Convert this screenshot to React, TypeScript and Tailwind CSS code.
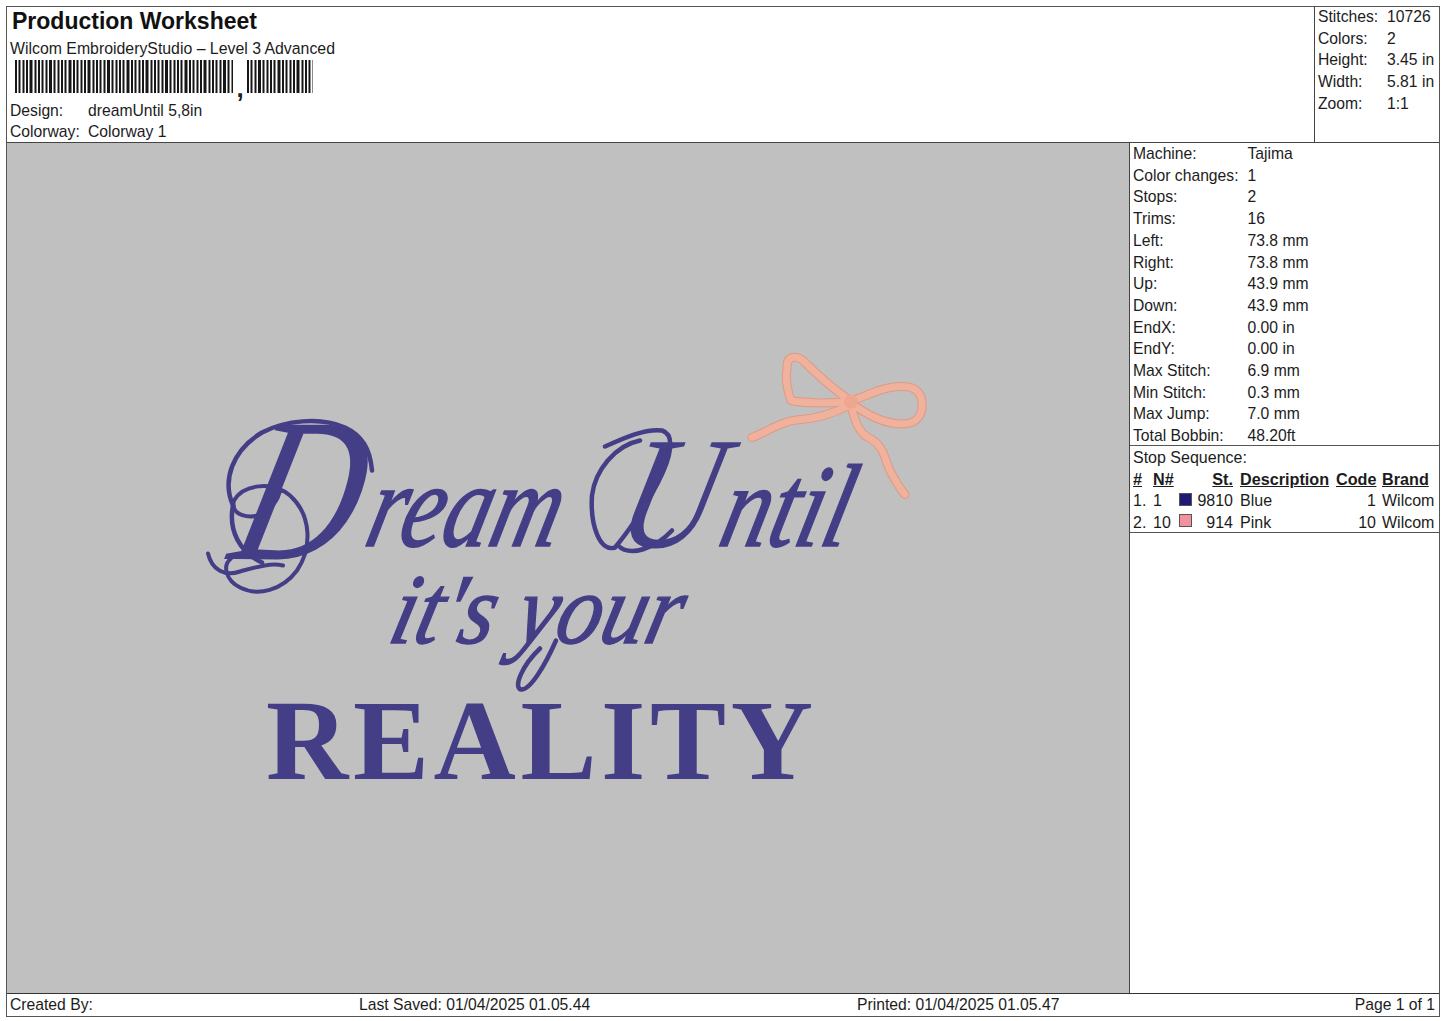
const font = "[font-family:'Liberation_Sans',Arial,sans-serif]";

const stats = [
  ["Stitches:", "10726"],
  ["Colors:", "2"],
  ["Height:", "3.45 in"],
  ["Width:", "5.81 in"],
  ["Zoom:", "1:1"],
];

const machine = [
  ["Machine:", "Tajima"],
  ["Color changes:", "1"],
  ["Stops:", "2"],
  ["Trims:", "16"],
  ["Left:", "73.8 mm"],
  ["Right:", "73.8 mm"],
  ["Up:", "43.9 mm"],
  ["Down:", "43.9 mm"],
  ["EndX:", "0.00 in"],
  ["EndY:", "0.00 in"],
  ["Max Stitch:", "6.9 mm"],
  ["Min Stitch:", "0.3 mm"],
  ["Max Jump:", "7.0 mm"],
  ["Total Bobbin:", "48.20ft"],
];

const bowPaths = [
  "M850 400C835 390 815 372 803 360C795 354 786 356 787 368C785 380 788 392 791 400C805 403 830 403 850 401",
  "M850 401C865 396 885 385 903 386C918 386 923 395 922 408C920 420 912 425 895 423C880 421 865 413 850 402",
  "M849 405C835 412 818 418 800 419C780 421 770 430 752 437",
  "M851 405C855 420 858 432 870 438C884 445 885 460 890 470C895 480 900 488 905 494",
];

function bars(width: number, seed: number) {
  const out: { x: number; w: number }[] = [];
  let x = 0;
  let s = seed;
  while (x < width) {
    s = (s * 9301 + 49297) % 233280;
    const w = s % 5 === 0 ? 3 : s % 2 === 0 ? 2 : 1.5;
    s = (s * 9301 + 49297) % 233280;
    const g = s % 3 === 0 ? 2 : 1.5;
    out.push({ x, w: Math.min(w, width - x) });
    x += w + g;
  }
  return out;
}

function Barcode({ width, seed }: { width: number; seed: number }) {
  return (
    <svg width={width} height={33} className="block shrink-0">
      {bars(width, seed).map((b) => (
        <rect key={b.x} x={b.x} y={0} width={b.w} height={33} fill="#161616" />
      ))}
    </svg>
  );
}

function Artwork() {
  const blue = "#443e87";
  return (
    <svg viewBox="7 143 1122 849" className="block w-full h-full">
      <g fill={blue} stroke={blue} fontFamily="'Liberation Serif','Times New Roman',serif">
        <text transform="translate(226 558) skewX(-14)" fontSize="205" fontStyle="italic" strokeWidth="0" textLength="122" lengthAdjust="spacingAndGlyphs">D</text>
        <text transform="translate(362 545) skewX(-14)" fontSize="120" fontStyle="italic" strokeWidth="1.5" textLength="192" lengthAdjust="spacingAndGlyphs">ream</text>
        <text transform="translate(612 546) skewX(-14)" fontSize="160" fontStyle="italic" strokeWidth="0" textLength="96" lengthAdjust="spacingAndGlyphs">U</text>
        <text transform="translate(716 545) skewX(-14)" fontSize="118" fontStyle="italic" strokeWidth="1.5" textLength="128" lengthAdjust="spacingAndGlyphs">ntil</text>
        <text transform="translate(386 642) skewX(-14)" fontSize="100" fontStyle="italic" strokeWidth="1.5" textLength="290" lengthAdjust="spacingAndGlyphs">it's your</text>
        <text x="266" y="778" fontSize="114" fontWeight="700" strokeWidth="0" textLength="547">REALITY</text>
      </g>
      <g fill="none" stroke={blue} strokeLinecap="round" strokeLinejoin="round">
        <path strokeWidth="4" d="M208 553C212 570 225 576 240 571C255 567 270 562 283 565" />
        <path strokeWidth="4" d="M231 558C222 565 226 580 240 587C258 596 282 590 297 570C312 548 312 515 290 495C272 480 243 484 234 500C230 515 250 520 265 512C275 505 280 495 280 487" />
        <path strokeWidth="4.5" d="M233 505C222 480 232 450 262 432C285 420 320 416 345 427C362 435 370 448 372 470" />
        <path strokeWidth="4.5" d="M233 505C228 530 240 552 262 562" />
        <path strokeWidth="4.5" d="M605 446C625 437 645 428 662 430C675 434 672 455 658 482C645 508 625 535 615 547C600 552 590 525 592 495C595 470 615 445 640 440" />
        <path strokeWidth="4.5" d="M618 545C630 557 655 548 672 530" />
        <path strokeWidth="4.5" d="M556 640C545 665 530 690 521 689C513 687 522 665 540 648" />
      </g>
      <g fill="none" stroke="#dd9a84" strokeLinecap="round" strokeLinejoin="round" strokeWidth="9">
        {bowPaths.map((d) => (
          <path key={d} d={d} />
        ))}
      </g>
      <g fill="none" stroke="#f0b19d" strokeLinecap="round" strokeLinejoin="round" strokeWidth="7">
        {bowPaths.map((d) => (
          <path key={d} d={d} />
        ))}
      </g>
      <circle cx="851" cy="401" r="7" fill="#eea78f" />
    </svg>
  );
}

export default function App() {
  return (
    <div className={`w-[1445px] h-[1021px] bg-white pt-[6px] pl-[6px] pr-[5px] pb-[4px] text-[15.7px] leading-[21.7px] text-[#1c1c1c] overflow-hidden ${font}`}>
      <div className="flex flex-col h-full border border-[#555]">
        <header className="flex h-[136px] shrink-0 border-b border-[#444]">
          <div className="flex-1 pl-[3px]">
            <h1 className="pl-[2px] pt-[1px] text-[23px] leading-[27px] font-bold text-[#111]">Production Worksheet</h1>
            <p className="mt-[3px] text-[15.85px] leading-[21px]">Wilcom EmbroideryStudio – Level 3 Advanced</p>
            <div className="flex items-end pl-[5px] mt-[1px] h-[33px]">
              <Barcode width={218} seed={17} />
              <span className="w-[14px] text-center text-[26px] leading-[20px] font-bold translate-y-[5px]">,</span>
              <Barcode width={66} seed={41} />
            </div>
            <div className="flex mt-[7px] leading-[21px]">
              <span className="w-[78px]">Design:</span>
              <span>dreamUntil 5,8in</span>
            </div>
            <div className="flex leading-[21px]">
              <span className="w-[78px]">Colorway:</span>
              <span>Colorway 1</span>
            </div>
          </div>
          <div className="w-[125px] shrink-0 border-l border-[#444] pl-[3px]">
            <div className="-mt-[1px]">
              {stats.map(([k, v]) => (
                <div key={k} className="flex">
                  <span className="w-[69px]">{k}</span>
                  <span>{v}</span>
                </div>
              ))}
            </div>
          </div>
        </header>
        <main className="flex flex-1 min-h-0">
          <div className="w-[1122px] shrink-0 bg-[#c0c0c0]">
            <Artwork />
          </div>
          <aside className="flex-1 flex flex-col border-l border-[#444] min-w-0">
            <div className="h-[303px] shrink-0 border-b border-[#555] pl-[3px]">
              {machine.map(([k, v]) => (
                <div key={k} className="flex">
                  <span className="w-[114.5px]">{k}</span>
                  <span>{v}</span>
                </div>
              ))}
            </div>
            <div className="h-[87px] shrink-0 border-b border-[#555] pl-[3px] pt-[1px] text-[16px]">
              <div>Stop Sequence:</div>
              <div className="grid grid-cols-[20px_26px_54px_103px_40px_59px] text-[16.2px] font-bold underline">
                <span>#</span>
                <span>N#</span>
                <span className="text-right">St.</span>
                <span className="pl-[7px]">Description</span>
                <span className="text-right">Code</span>
                <span className="pl-[6px]">Brand</span>
              </div>
              <div className="grid grid-cols-[20px_26px_54px_103px_40px_59px]">
                <span>1.</span>
                <span>1</span>
                <span className="flex items-center justify-between">
                  <span className="block w-[13px] h-[13px] bg-[#1f1a78] border border-[#555] -translate-y-[2px]" />
                  <span>9810</span>
                </span>
                <span className="pl-[7px]">Blue</span>
                <span className="text-right">1</span>
                <span className="pl-[6px]">Wilcom</span>
              </div>
              <div className="grid grid-cols-[20px_26px_54px_103px_40px_59px]">
                <span>2.</span>
                <span>10</span>
                <span className="flex items-center justify-between">
                  <span className="block w-[13px] h-[13px] bg-[#f2929f] border border-[#555] -translate-y-[2px]" />
                  <span>914</span>
                </span>
                <span className="pl-[7px]">Pink</span>
                <span className="text-right">10</span>
                <span className="pl-[6px]">Wilcom</span>
              </div>
            </div>
          </aside>
        </main>
        <footer className="flex items-center h-[23px] shrink-0 border-t border-[#333] pl-[3px] pr-[4px]">
          <span className="w-[349px]">Created By:</span>
          <span className="w-[498px]">Last Saved: 01/04/2025 01.05.44</span>
          <span className="flex-1">Printed: 01/04/2025 01.05.47</span>
          <span>Page 1 of 1</span>
        </footer>
      </div>
    </div>
  );
}
